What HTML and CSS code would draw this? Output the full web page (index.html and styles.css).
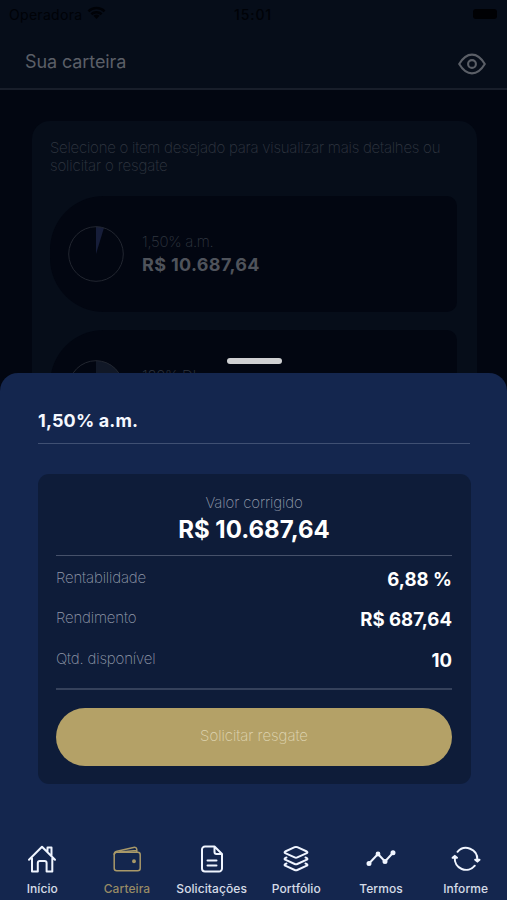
FILE: index.html
```html
<!DOCTYPE html>
<html lang="pt-BR">
<head>
<meta charset="utf-8">
<meta name="viewport" content="width=device-width, initial-scale=1">
<title>Sua carteira</title>
<link rel="stylesheet" href="styles.css">
</head>
<body>
<div class="screen">
  <div class="backdrop">
    <header class="top">
      <div class="status">
        <div class="carrier"><span class="carrier-name">Operadora</span>
          <svg class="wifi" viewBox="0 0 20 14"><path d="M1.5 5.2a12.2 12.2 0 0 1 17 0M4.6 8.3a7.8 7.8 0 0 1 10.8 0" fill="none" stroke="currentColor" stroke-width="2.6"/><path d="M6.8 10a4.6 4.6 0 0 1 6.4 0L10 13.4z" fill="currentColor"/></svg>
        </div>
        <span class="clock">15:01</span>
        <span class="battery"></span>
      </div>
      <div class="titlebar">
        <h1>Sua carteira</h1>
        <svg class="eye" viewBox="0 0 28 22" fill="none" stroke="currentColor" stroke-width="2.1"><path d="M1.2 11C4.2 6 8.5 1.6 14 1.6S23.8 6 26.8 11C23.8 16 19.5 20.4 14 20.4S4.2 16 1.2 11z" stroke-linejoin="round"/><circle cx="14" cy="11" r="3.9"/></svg>
      </div>
    </header>
    <main class="portfolio">
      <p class="hint">Selecione o item desejado para visualizar mais detalhes ou<br><span class="hint-end">solicitar o resgate</span></p>
      <article class="asset">
        <svg class="pie" viewBox="0 0 56 56"><path d="M28 28V.5a27.5 27.5 0 0 1 8 1.2z" fill="#161d39"/><circle cx="28" cy="28" r="27.3" fill="none" stroke="#222630" stroke-width="1"/></svg>
        <div><span class="rate">1,50% a.m.</span><strong class="amount">R$ 10.687,64</strong></div>
      </article>
      <article class="asset">
        <svg class="pie" viewBox="0 0 56 56"><path d="M28 28V.5A27.5 27.5 0 0 1 55.5 28z" fill="#111827"/><circle cx="28" cy="28" r="27.3" fill="none" stroke="#222630" stroke-width="1"/></svg>
        <div class="next"><span class="rate">120% DI</span></div>
      </article>
    </main>
  </div>
  <section class="sheet">
    <span class="handle"></span>
    <h2>1,50% a.m.</h2>
    <div class="details">
      <div class="total"><span class="total-label">Valor corrigido</span><strong>R$ 10.687,64</strong></div>
      <dl class="facts">
        <div class="fact"><dt>Rentabilidade</dt><dd>6,88 %</dd></div>
        <div class="fact"><dt>Rendimento</dt><dd>R$ 687,64</dd></div>
        <div class="fact"><dt>Qtd. disponível</dt><dd>10</dd></div>
      </dl>
      <button class="redeem">Solicitar resgate</button>
    </div>
    <nav class="tabs">
      <a class="tab"><svg viewBox="0 0 30 30"><path d="M2 15.8 15 2.8 28 15.8M5 14.500V27.500H10.800V19a2 2 0 0 1 2-2h4.800a2 2 0 0 1 2 2V27.500H25.300V14.500M20.500 7.500V3.500h4v8"/></svg><span>Início</span></a>
      <a class="tab active"><svg viewBox="0 0 30 30" class="thin"><rect x="2.200" y="8.300" width="26" height="18.500" rx="2.500"/><path d="M2.200 10.500Q2.200 7.800 5 7.200L21.500 3.400Q24.500 2.900 24.800 5.500V8M8 8 24.500 6.500"/><circle cx="22" cy="17.200" r="1.200" class="fill"/></svg><span>Carteira</span></a>
      <a class="tab"><svg viewBox="0 0 30 30"><path d="M17.500 2.500H8A3 3 0 0 0 5 5.500V24.500a3 3 0 0 0 3 3H22a3 3 0 0 0 3-3V10zM17.500 2.500V8a2 2 0 0 0 2 2H25M10.500 16.500H19.500M10.500 21.500H19.500"/></svg><span>Solicitações</span></a>
      <a class="tab"><svg viewBox="0 0 30 30"><path d="M13.700 3.200 4.200 7.500Q3 8.300 4.200 9.100L13.700 13.400Q15 14 16.300 13.400L25.800 9.100Q27 8.300 25.800 7.500L16.300 3.200Q15 2.600 13.700 3.200zM5.500 13.500 4.200 14.100Q3 14.900 4.200 15.700L13.700 20Q15 20.600 16.300 20L25.800 15.700Q27 14.900 25.800 14.100L24.500 13.500M5.500 19.500 4.200 20.100Q3 20.900 4.200 21.700L13.700 26Q15 26.600 16.300 26L25.800 21.700Q27 20.900 25.800 20.100L24.500 19.500"/></svg><span>Portfólio</span></a>
      <a class="tab"><svg viewBox="0 0 30 30"><path d="M3 19.500 12 10 19 17.500 27 8.800"/><g class="fill"><circle cx="3" cy="19.500" r="1.500"/><circle cx="12" cy="10" r="1.400"/><circle cx="19" cy="17.500" r="1.500"/><circle cx="27" cy="8.800" r="1.500"/></g></svg><span>Termos</span></a>
      <a class="tab"><svg viewBox="0 0 30 30"><path d="M6.500 7.800A11.300 11.300 0 0 1 26.300 15.500M23.800 21.700A11.300 11.300 0 0 1 3.800 13.500"/><path class="fill" d="M24.200 15.700H28.500L26.400 17.600zM1.600 13.800H6L3.800 11.900z"/></svg><span>Informe</span></a>
    </nav>
  </section>
</div>
</body>
</html>
```

FILE: styles.css
```css
* { box-sizing: border-box; }
body { margin: 0; background: #020611; font-family: Inter, "Liberation Sans", sans-serif; }
h1, h2, p, dl, dd { margin: 0; }
svg { display: block; flex: none; }

.screen { position: relative; width: 507px; height: 900px; overflow: hidden; background: #020611; }
.backdrop { height: 392px; overflow: hidden; }

.top { height: 90px; background: #060d19; border-bottom: 2px solid #181e2a; }
.status { display: grid; grid-template-columns: 1fr auto 1fr; align-items: center; height: 28px; padding: 0 10px 0 9px; color: #000207; font-size: 14px; letter-spacing: .3px; }
.carrier { display: flex; align-items: center; gap: 5px; }
.wifi { width: 19px; height: 14px; margin-top: -2px; }
.clock { font-weight: 500; letter-spacing: .9px; }
.battery { justify-self: end; width: 24px; height: 10px; border-radius: 3px; background: #000104; }
.titlebar { display: flex; align-items: center; justify-content: space-between; height: 66px; padding: 0 21px 0 25px; color: #5b5f67; }
.titlebar h1 { font-size: 18px; font-weight: 400; line-height: 24px; letter-spacing: -.1px; padding-top: 1px; }
.eye { width: 28px; height: 22px; margin-top: 5px; }

.portfolio { display: flex; flex-direction: column; gap: 18px; width: 445px; margin: 31px 0 0 32px; padding: 18px 20px 20px 18px; border-radius: 18px; background: #060d19; }
.hint { height: 39px; font-size: 15px; line-height: 18px; font-weight: 200; letter-spacing: -.24px; white-space: nowrap; color: #303640; }
.hint-end { letter-spacing: -.12px; }
.asset { display: flex; flex: none; align-items: center; gap: 18px; height: 116px; padding-left: 18px; border-radius: 54px 10px 10px 54px; background: #020611; }
.pie { width: 56px; height: 56px; }
.asset div { display: flex; flex-direction: column; padding-top: 2px; }
.asset .next { height: 48px; }
.rate { font-size: 15px; font-weight: 200; line-height: 20px; letter-spacing: -.3px; color: #303640; }
.amount { font-size: 18px; font-weight: 700; line-height: 26px; letter-spacing: .35px; color: #4f535b; }

.sheet { position: absolute; inset: 373px 0 0; display: flex; flex-direction: column; padding: 35px 37px 0 38px; border-radius: 18px 18px 0 0; background: #14264e; }
.handle { position: absolute; top: -15px; left: 227px; width: 55px; height: 6px; border-radius: 3px; background: #cfd0d2; }
.sheet h2 { height: 36px; border-bottom: 1px solid #405073; color: #f5f8ff; font-size: 18px; font-weight: 700; line-height: 26px; letter-spacing: .15px; }
.details { height: 310px; margin: 30px -1px 0 0; padding: 18px 19px 18px 18px; border-radius: 11px; background: #0e1c39; }
.total { display: flex; flex-direction: column; align-items: center; height: 64px; border-bottom: 1px solid #46516a; }
.total-label { color: #9199a9; font-size: 15px; font-weight: 200; line-height: 22px; letter-spacing: -.15px; }
.total strong { color: #fff; font-size: 24px; font-weight: 700; line-height: 32px; }
.facts { height: 134px; padding-top: 4px; border-bottom: 2px solid #35415b; }
.fact { display: flex; justify-content: space-between; height: 40.4px; }
.fact dt { color: #9199a9; font-size: 15px; font-weight: 200; line-height: 36px; letter-spacing: -.18px; }
.fact dd { color: #fff; font-size: 18.6px; font-weight: 700; line-height: 38px; }
.redeem { display: block; width: 100%; height: 58px; margin-top: 18px; padding: 0 0 3px; border: 0; border-radius: 29px; background: #b4a167; color: #dfd5b2; font: 200 15px Inter, sans-serif; letter-spacing: -.05px; }

.tabs { display: grid; grid-template-columns: repeat(6, 1fr); margin: 60px -38px 0 -38px; }
.tab { display: flex; flex-direction: column; align-items: center; gap: 6px; color: #f0f5ff; font-size: 12px; font-weight: 500; line-height: 18px; letter-spacing: .08px; }
.tab span { opacity: .88; }
.tab svg { width: 30px; height: 30px; fill: none; stroke: currentColor; stroke-width: 2; stroke-linecap: round; stroke-linejoin: round; }
.tab .thin { stroke-width: 1.5; }
.tab .fill { fill: currentColor; }
.active { color: #a99969; }
```
